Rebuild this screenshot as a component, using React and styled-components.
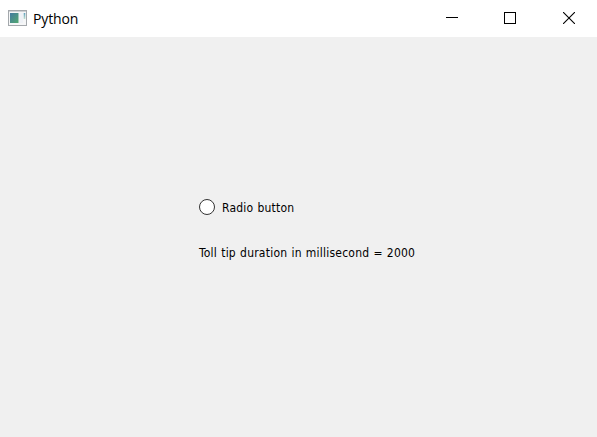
import React from "react";
import styled, { createGlobalStyle } from "styled-components";

const GlobalStyle = createGlobalStyle`
  * { box-sizing: border-box; }
  body { margin: 0; overflow: hidden; background: #f0f0f0; }
`;

const Window = styled.main`
  display: flex;
  flex-direction: column;
  width: 597px;
  height: 437px;
  background: #f0f0f0;
  color: #000;
`;

const TitleBar = styled.header`
  display: flex;
  align-items: center;
  height: 37px;
  padding: 0 0 1px 8px;
  background: #fff;
`;

const Title = styled.h1`
  flex: 1;
  margin: 0 0 0 6px;
  padding-top: 1px;
  font: 400 14px/20px "Open Sans", "Noto Sans", sans-serif;
  letter-spacing: -0.15px;
`;

const Controls = styled.div`
  display: flex;
  height: 100%;
`;

const ControlButton = styled.button`
  display: flex;
  align-items: center;
  justify-content: center;
  width: ${(p) => p.$width}px;
  padding: 0;
  border: 0;
  background: transparent;
`;

const CloseButton = styled(ControlButton)`
  padding-left: 2px;
`;

const Content = styled.section`
  display: flex;
  flex: 1;
  flex-direction: column;
  align-items: flex-start;
  gap: 25px;
  padding: 160px 0 0 199px;
  font: 400 12px/20px "DejaVu Sans Condensed", "DejaVu Sans", sans-serif;
  font-stretch: condensed;
`;

const RadioLabel = styled.label`
  display: flex;
  align-items: center;
  gap: 7px;
  height: 20px;
`;

const Radio = styled.input`
  appearance: none;
  width: 16px;
  height: 16px;
  margin: 0;
  border: 1px solid #333;
  border-radius: 50%;
  background: #fff;
`;

const Text = styled.span`
  padding-top: 1px;
  white-space: nowrap;
  letter-spacing: ${(p) => p.$tracking}px;
  word-spacing: 0.5px;
`;

const AppIcon = () => (
  <svg width="19" height="16" viewBox="0 0 19 16" aria-hidden="true">
    <defs>
      <linearGradient id="pane" x1="0" y1="0" x2="1" y2="1">
        <stop offset="0" stopColor="#437aa0" />
        <stop offset="1" stopColor="#52a870" />
      </linearGradient>
      <linearGradient id="strip" x1="0" y1="0" x2="0" y2="1">
        <stop offset="0" stopColor="#5f9fbd" />
        <stop offset="1" stopColor="#bfe0cf" />
      </linearGradient>
    </defs>
    <rect x="0.5" y="0.5" width="18" height="15" fill="#f5f6f7" stroke="#a4a8ac" />
    <path d="M1 1.5h17" stroke="#cdd0d4" />
    <rect x="2" y="3" width="8.5" height="10" fill="url(#pane)" />
    <rect x="11" y="3" width="4" height="10" fill="#eef1f6" />
    <rect x="15.7" y="3" width="1.6" height="6" fill="url(#strip)" />
  </svg>
);

export default function App() {
  return (
    <>
      <GlobalStyle />
      <Window>
        <TitleBar>
          <AppIcon />
          <Title>Python</Title>
          <Controls>
            <ControlButton $width={58} aria-label="Minimize">
              <svg width="12" height="12" shapeRendering="crispEdges">
                <path d="M0 5.5h12" stroke="#000" />
              </svg>
            </ControlButton>
            <ControlButton $width={58} aria-label="Maximize">
              <svg width="12" height="12" shapeRendering="crispEdges">
                <rect x="0.5" y="0.5" width="11" height="11" fill="none" stroke="#000" />
              </svg>
            </ControlButton>
            <CloseButton $width={58} aria-label="Close">
              <svg width="12" height="12">
                <path d="M0 0L12 12M12 0L0 12" stroke="#000" strokeWidth="1.1" />
              </svg>
            </CloseButton>
          </Controls>
        </TitleBar>
        <Content>
          <RadioLabel>
            <Radio type="radio" name="option" />
            <Text $tracking={0.2}>Radio button</Text>
          </RadioLabel>
          <Text $tracking={0.22}>Toll tip duration in millisecond = 2000</Text>
        </Content>
      </Window>
    </>
  );
}
